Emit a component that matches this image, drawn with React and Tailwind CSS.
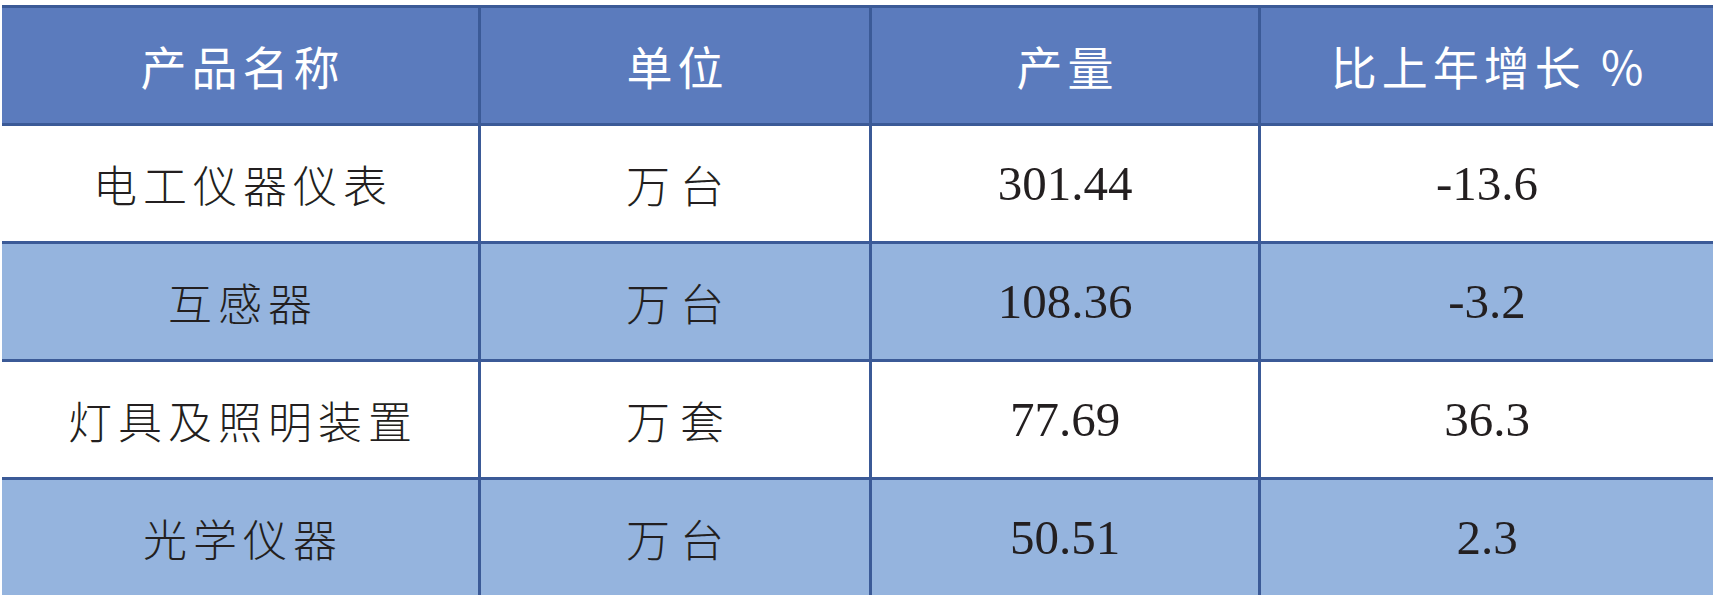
const rows = [
  { name: '电工仪器仪表', unit: '万台', output: '301.44', growth: '-13.6', shaded: false },
  { name: '互感器', unit: '万台', output: '108.36', growth: '-3.2', shaded: true },
  { name: '灯具及照明装置', unit: '万套', output: '77.69', growth: '36.3', shaded: false },
  { name: '光学仪器', unit: '万台', output: '50.51', growth: '2.3', shaded: true },
]

const headers = ['产品名称', '单位', '产量', '比上年增长 %']

export default function App() {
  return (
    <div className="h-[596px] w-full overflow-hidden bg-white pl-[2px] pt-[5px]">
      <div className="grid grid-cols-[476px_388px_386px_1fr] gap-[3px] border-t-[3px] border-[#3b5a97] bg-[#3b5a97]">
        {headers.map((h) => (
          <div
            key={h}
            className="flex h-[115px] items-center justify-center bg-[#5b7bbd] pl-[5px] font-['Noto_Sans_CJK_SC','Noto_Sans',sans-serif] text-[46px] tracking-[5px] text-white"
          >
            {h}
          </div>
        ))}

        {rows.map((r) => {
          const bg = r.shaded ? 'bg-[#95b4de]' : 'bg-white'
          return [
            <div
              key={r.name + '-n'}
              className={`flex h-[115px] items-center justify-center ${bg} pl-[6px] font-['Noto_Sans_CJK_SC','Noto_Sans',sans-serif] text-[44px] font-light tracking-[6px] text-[#231f20]`}
            >
              {r.name}
            </div>,
            <div
              key={r.name + '-u'}
              className={`flex h-[115px] items-center justify-center ${bg} pl-[10px] font-['Noto_Sans_CJK_SC','Noto_Sans',sans-serif] text-[44px] font-light tracking-[10px] text-[#231f20]`}
            >
              {r.unit}
            </div>,
            <div
              key={r.name + '-o'}
              className={`flex h-[115px] items-center justify-center ${bg} font-['Liberation_Serif',serif] text-[49px] text-[#231f20]`}
            >
              {r.output}
            </div>,
            <div
              key={r.name + '-g'}
              className={`flex h-[115px] items-center justify-center ${bg} font-['Liberation_Serif',serif] text-[49px] text-[#231f20]`}
            >
              {r.growth}
            </div>,
          ]
        })}
      </div>
    </div>
  )
}
